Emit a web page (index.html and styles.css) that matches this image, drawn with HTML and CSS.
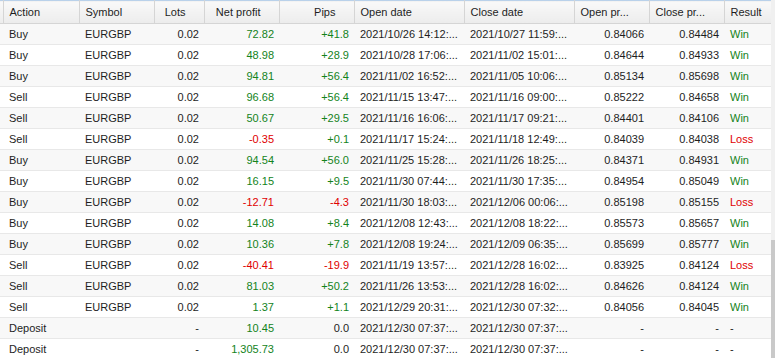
FILE: index.html
```html
<!DOCTYPE html>
<html>
<head>
<meta charset="utf-8">
<link rel="stylesheet" href="styles.css">
</head>
<body>
<div class="frame">
<div class="grid-wrap">
<table class="trades">
<colgroup>
<col class="c-pad"><col class="c-76"><col class="c-75"><col class="c-50"><col class="c-75"><col class="c-75"><col class="c-110"><col class="c-110"><col class="c-75"><col class="c-75"><col>
</colgroup>
<thead>
<tr>
<th></th><th class="l">Action</th><th class="l">Symbol</th><th class="r">Lots</th><th class="r">Net profit</th><th class="r">Pips</th><th class="l">Open date</th><th class="l">Close date</th><th class="l">Open pr...</th><th class="l">Close pr...</th><th class="l">Result</th>
</tr>
</thead>
<tbody>
<tr><td></td><td>Buy</td><td>EURGBP</td><td class="n">0.02</td><td class="n pos">72.82</td><td class="n pos">+41.8</td><td>2021/10/26 14:12:...</td><td>2021/10/27 11:59:...</td><td class="n">0.84066</td><td class="n">0.84484</td><td class="pos">Win</td></tr>
<tr><td></td><td>Buy</td><td>EURGBP</td><td class="n">0.02</td><td class="n pos">48.98</td><td class="n pos">+28.9</td><td>2021/10/28 17:06:...</td><td>2021/11/02 15:01:...</td><td class="n">0.84644</td><td class="n">0.84933</td><td class="pos">Win</td></tr>
<tr><td></td><td>Buy</td><td>EURGBP</td><td class="n">0.02</td><td class="n pos">94.81</td><td class="n pos">+56.4</td><td>2021/11/02 16:52:...</td><td>2021/11/05 10:06:...</td><td class="n">0.85134</td><td class="n">0.85698</td><td class="pos">Win</td></tr>
<tr><td></td><td>Sell</td><td>EURGBP</td><td class="n">0.02</td><td class="n pos">96.68</td><td class="n pos">+56.4</td><td>2021/11/15 13:47:...</td><td>2021/11/16 09:00:...</td><td class="n">0.85222</td><td class="n">0.84658</td><td class="pos">Win</td></tr>
<tr><td></td><td>Sell</td><td>EURGBP</td><td class="n">0.02</td><td class="n pos">50.67</td><td class="n pos">+29.5</td><td>2021/11/16 16:06:...</td><td>2021/11/17 09:21:...</td><td class="n">0.84401</td><td class="n">0.84106</td><td class="pos">Win</td></tr>
<tr><td></td><td>Sell</td><td>EURGBP</td><td class="n">0.02</td><td class="n neg">-0.35</td><td class="n pos">+0.1</td><td>2021/11/17 15:24:...</td><td>2021/11/18 12:49:...</td><td class="n">0.84039</td><td class="n">0.84038</td><td class="neg">Loss</td></tr>
<tr><td></td><td>Buy</td><td>EURGBP</td><td class="n">0.02</td><td class="n pos">94.54</td><td class="n pos">+56.0</td><td>2021/11/25 15:28:...</td><td>2021/11/26 18:25:...</td><td class="n">0.84371</td><td class="n">0.84931</td><td class="pos">Win</td></tr>
<tr><td></td><td>Buy</td><td>EURGBP</td><td class="n">0.02</td><td class="n pos">16.15</td><td class="n pos">+9.5</td><td>2021/11/30 07:44:...</td><td>2021/11/30 17:35:...</td><td class="n">0.84954</td><td class="n">0.85049</td><td class="pos">Win</td></tr>
<tr><td></td><td>Buy</td><td>EURGBP</td><td class="n">0.02</td><td class="n neg">-12.71</td><td class="n neg">-4.3</td><td>2021/11/30 18:03:...</td><td>2021/12/06 00:06:...</td><td class="n">0.85198</td><td class="n">0.85155</td><td class="neg">Loss</td></tr>
<tr><td></td><td>Buy</td><td>EURGBP</td><td class="n">0.02</td><td class="n pos">14.08</td><td class="n pos">+8.4</td><td>2021/12/08 12:43:...</td><td>2021/12/08 18:22:...</td><td class="n">0.85573</td><td class="n">0.85657</td><td class="pos">Win</td></tr>
<tr><td></td><td>Buy</td><td>EURGBP</td><td class="n">0.02</td><td class="n pos">10.36</td><td class="n pos">+7.8</td><td>2021/12/08 19:24:...</td><td>2021/12/09 06:35:...</td><td class="n">0.85699</td><td class="n">0.85777</td><td class="pos">Win</td></tr>
<tr><td></td><td>Sell</td><td>EURGBP</td><td class="n">0.02</td><td class="n neg">-40.41</td><td class="n neg">-19.9</td><td>2021/11/19 13:57:...</td><td>2021/12/28 16:02:...</td><td class="n">0.83925</td><td class="n">0.84124</td><td class="neg">Loss</td></tr>
<tr><td></td><td>Sell</td><td>EURGBP</td><td class="n">0.02</td><td class="n pos">81.03</td><td class="n pos">+50.2</td><td>2021/11/26 13:53:...</td><td>2021/12/28 16:02:...</td><td class="n">0.84626</td><td class="n">0.84124</td><td class="pos">Win</td></tr>
<tr><td></td><td>Sell</td><td>EURGBP</td><td class="n">0.02</td><td class="n pos">1.37</td><td class="n pos">+1.1</td><td>2021/12/29 20:31:...</td><td>2021/12/30 07:32:...</td><td class="n">0.84056</td><td class="n">0.84045</td><td class="pos">Win</td></tr>
<tr><td></td><td>Deposit</td><td></td><td class="n">-</td><td class="n pos">10.45</td><td class="n">0.0</td><td>2021/12/30 07:37:...</td><td>2021/12/30 07:37:...</td><td class="n">-</td><td class="n">-</td><td>-</td></tr>
<tr><td></td><td>Deposit</td><td></td><td class="n">-</td><td class="n pos">1,305.73</td><td class="n">0.0</td><td>2021/12/30 07:37:...</td><td>2021/12/30 07:37:...</td><td class="n">-</td><td class="n">-</td><td>-</td></tr>
</tbody>
</table>
</div>
<div class="scrollbar"><div class="thumb"></div></div>
</div>
</body>
</html>
```
FILE: styles.css
```css
html, body {
  margin: 0;
  padding: 0;
  background: #ffffff;
  overflow: hidden;
}
body {
  width: 775px;
  height: 358px;
  font-family: "Liberation Sans", Arial, sans-serif;
  font-size: 11px;
  color: #1e1e1e;
}
.frame {
  display: flex;
  width: 775px;
  height: 358px;
}
.grid-wrap {
  width: 771px;
  height: 358px;
  overflow: hidden;
}
.scrollbar {
  width: 4px;
  height: 358px;
  background: #f0f0f0;
}
.thumb {
  margin-top: 240px;
  height: 118px;
  background: #c9c9c9;
}
.trades {
  width: 771px;
  table-layout: fixed;
  border-collapse: collapse;
  border-top: 1px solid #b9d1ea;
}
.c-pad { width: 3px; }
.c-76 { width: 76px; }
.c-75 { width: 75px; }
.c-50 { width: 50px; }
.c-110 { width: 110px; }

.trades th {
  height: 22px;
  padding: 0 0 0 6px;
  font-weight: normal;
  color: #1e1e1e;
  background: linear-gradient(#f9f9f9, #ececec);
  border-right: 1px solid #d5d5d5;
  border-bottom: 1px solid #d5d5d5;
  white-space: nowrap;
  overflow: hidden;
}
.trades th:first-child { padding: 0; }
.trades th:last-child { border-right: none; }
.trades th.l { text-align: left; }
.trades th.r { text-align: right; padding: 0 18px 0 0; }

.trades td {
  height: 20px;
  padding: 0 5px 0 6px;
  border-bottom: 1px solid #e8e8e8;
  white-space: nowrap;
  overflow: hidden;
}
.trades td:first-child { padding: 0; }
.trades tbody tr:nth-child(odd) td { background: #f8f8f8; }
.trades tbody tr:nth-child(even) td { background: #ffffff; }
.trades td.n { text-align: right; }
.trades .pos { color: #13831b; }
.trades .neg { color: #e00000; }
```
